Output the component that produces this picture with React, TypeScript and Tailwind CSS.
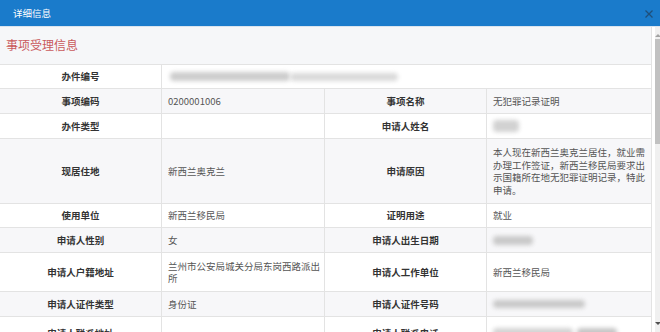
const font = { fontFamily: '"Noto Sans CJK SC", "Liberation Sans", sans-serif' };

type Row = {
  h: string;
  l1: string;
  v1: React.ReactNode;
  l2?: string;
  v2?: React.ReactNode;
  span?: boolean;
};

const Blur = ({ w, h = 'h-[9px]', tone = 'bg-[#c9c9c9]' }: { w: string; h?: string; tone?: string }) => (
  <div className={`${w} ${h} ${tone} rounded-sm blur-[2px]`} />
);

const rows: Row[] = [
  {
    h: 'h-[24px]',
    l1: '办件编号',
    v1: (
      <div className="flex items-center">
        <Blur w="w-[120px]" tone="bg-[#cdcdcd]" />
        <Blur w="w-[108px]" h="h-[8px]" tone="bg-[#dadada]" />
      </div>
    ),
    span: true,
  },
  { h: 'h-[25px]', l1: '事项编码', v1: '0200001006', l2: '事项名称', v2: '无犯罪记录证明' },
  { h: 'h-[25px]', l1: '办件类型', v1: '', l2: '申请人姓名', v2: <Blur w="w-[26px]" h="h-[12px]" tone="bg-[#d2d2d2]" /> },
  {
    h: 'h-[65px]',
    l1: '现居住地',
    v1: '新西兰奥克兰',
    l2: '申请原因',
    v2: '本人现在新西兰奥克兰居住，就业需办理工作签证，新西兰移民局要求出示国籍所在地无犯罪证明记录，特此申请。',
  },
  { h: 'h-[24px]', l1: '使用单位', v1: '新西兰移民局', l2: '证明用途', v2: '就业' },
  { h: 'h-[25px]', l1: '申请人性别', v1: '女', l2: '申请人出生日期', v2: <Blur w="w-[40px]" /> },
  { h: 'h-[39px]', l1: '申请人户籍地址', v1: '兰州市公安局城关分局东岗西路派出所', l2: '申请人工作单位', v2: '新西兰移民局' },
  { h: 'h-[25px]', l1: '申请人证件类型', v1: '身份证', l2: '申请人证件号码', v2: <Blur w="w-[92px]" h="h-[8px]" /> },
  {
    h: 'h-[34px]',
    l1: '申请人联系地址',
    v1: '',
    l2: '申请人联系电话',
    v2: (
      <div className="flex items-start gap-1 pt-[2px]">
        <Blur w="w-[80px]" h="h-[10px]" tone="bg-[#d4d4d4]" />
        <Blur w="w-[40px]" h="h-[14px]" tone="bg-[#c6c6c6]" />
      </div>
    ),
  },
];

const Label = ({ text }: { text: string }) => (
  <div className="flex items-center justify-center border-r border-[#e3e3e3] font-bold text-[#333] px-2">
    {text}
  </div>
);

const Value = ({ v, last }: { v: React.ReactNode; last?: boolean }) => (
  <div className={`flex items-center pl-[6px] pr-[2px] text-[#555] ${last ? '' : 'border-r border-[#e3e3e3]'}`}>
    {typeof v === 'string' ? <span>{v}</span> : v}
  </div>
);

export default function App() {
  return (
    <div className="w-[660px] h-[332px] overflow-hidden bg-white flex flex-col text-[9.5px] leading-[12.5px]" style={font}>
      <div className="h-[27px] shrink-0 bg-[#1a7bcb] border-b border-[#d9e4ef] flex items-center justify-between pl-[13px] pr-[6px]">
        <span className="text-white text-[9.5px]">详细信息</span>
        <svg width="10" height="10" viewBox="0 0 10 10" className="mt-[2px]">
          <path d="M1.5 1.5 L8.5 8.5 M8.5 1.5 L1.5 8.5" stroke="#1f4f7a" strokeWidth="1.3" />
        </svg>
      </div>
      <div className="flex flex-1 min-h-0">
        <div className="w-[652px] shrink-0 border-r border-[#e3e3e3]">
          <div className="h-[38px] bg-[#f6f7f9] border-b border-[#e3e3e3] flex items-center pl-[6px]">
            <span className="text-[12px] text-[#c95a5c]">事项受理信息</span>
          </div>
          {rows.map((r, i) => (
            <div
              key={i}
              className={`grid grid-cols-[162px_163px_162px_164px] border-b border-[#e3e3e3] ${r.h} ${i % 2 === 1 ? 'bg-[#f7f7f9]' : 'bg-white'}`}
            >
              <Label text={r.l1} />
              {r.span ? (
                <div className="col-span-3 flex items-center pl-[8px] text-[#555]">{r.v1}</div>
              ) : (
                <>
                  <Value v={r.v1} />
                  <Label text={r.l2 ?? ''} />
                  <Value v={r.v2} last />
                </>
              )}
            </div>
          ))}
        </div>
        <div className="w-[3px] shrink-0 bg-white" />
        <div className="flex-1 flex flex-col bg-[#f0f0f0]">
          <div className="h-[12px] flex items-end justify-center pb-[2px]">
            <div className="w-0 h-0 border-l-[3px] border-r-[3px] border-b-[3px] border-l-transparent border-r-transparent border-b-[#a3a3a3]" />
          </div>
          <div className="h-[105px] bg-[#c1c1c1]" />
          <div className="flex-1" />
          <div className="h-[10px] flex items-start justify-center">
            <div className="w-0 h-0 border-l-[3px] border-r-[3px] border-t-[3px] border-l-transparent border-r-transparent border-t-[#505050]" />
          </div>
        </div>
      </div>
    </div>
  );
}
